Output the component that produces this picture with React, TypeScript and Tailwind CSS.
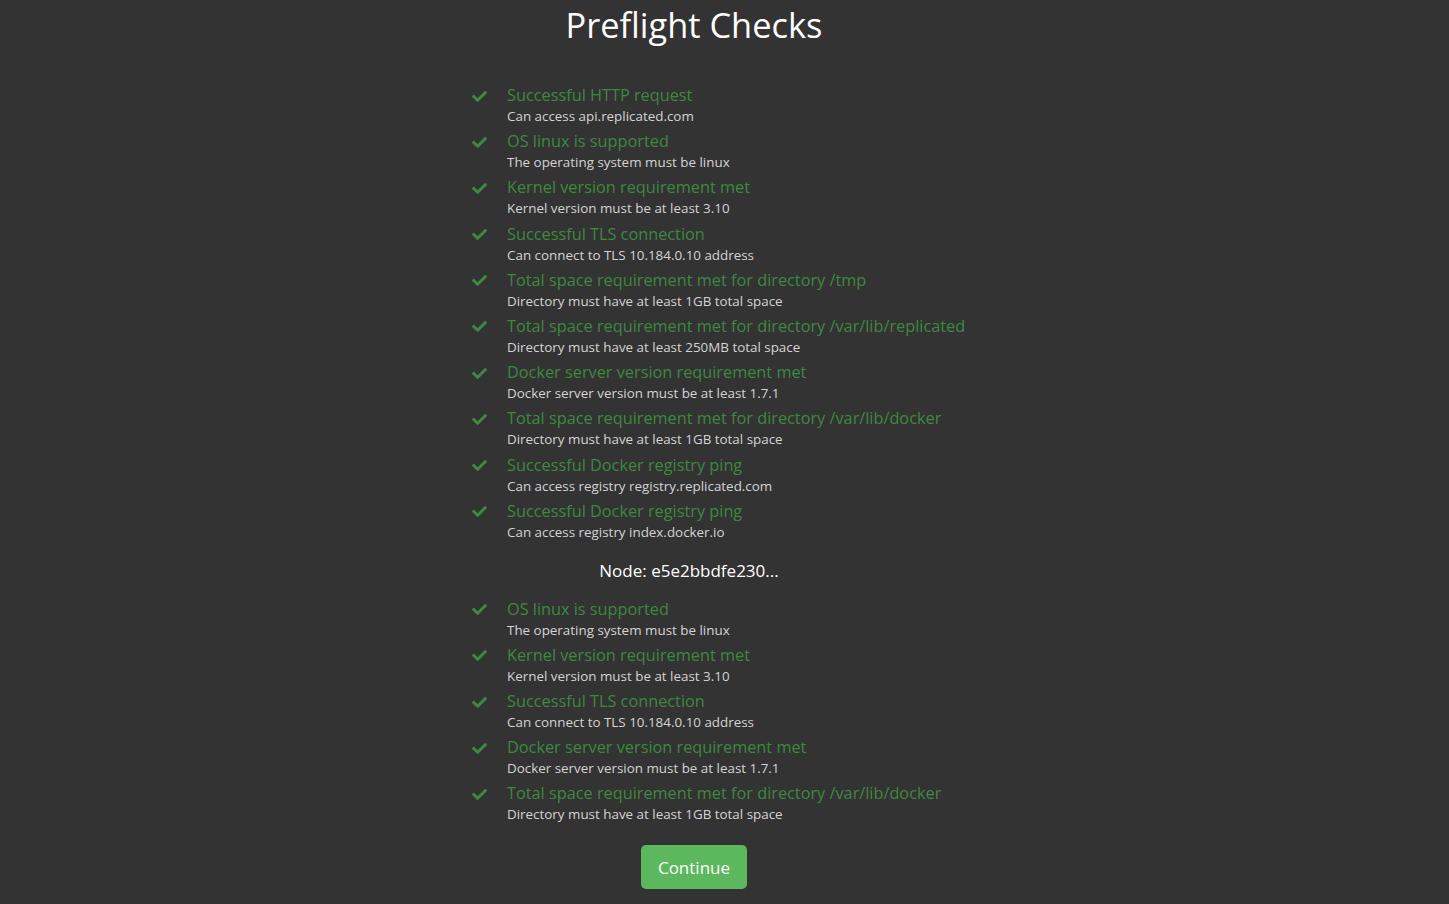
import React from 'react';
import { FaCheck } from 'react-icons/fa';

type Check = {
  title: string;
  detail: string;
};

const clusterChecks: Check[] = [
  { title: 'Successful HTTP request', detail: 'Can access api.replicated.com' },
  { title: 'OS linux is supported', detail: 'The operating system must be linux' },
  { title: 'Kernel version requirement met', detail: 'Kernel version must be at least 3.10' },
  { title: 'Successful TLS connection', detail: 'Can connect to TLS 10.184.0.10 address' },
  { title: 'Total space requirement met for directory /tmp', detail: 'Directory must have at least 1GB total space' },
  { title: 'Total space requirement met for directory /var/lib/replicated', detail: 'Directory must have at least 250MB total space' },
  { title: 'Docker server version requirement met', detail: 'Docker server version must be at least 1.7.1' },
  { title: 'Total space requirement met for directory /var/lib/docker', detail: 'Directory must have at least 1GB total space' },
  { title: 'Successful Docker registry ping', detail: 'Can access registry registry.replicated.com' },
  { title: 'Successful Docker registry ping', detail: 'Can access registry index.docker.io' },
];

const nodeChecks: Check[] = [
  { title: 'OS linux is supported', detail: 'The operating system must be linux' },
  { title: 'Kernel version requirement met', detail: 'Kernel version must be at least 3.10' },
  { title: 'Successful TLS connection', detail: 'Can connect to TLS 10.184.0.10 address' },
  { title: 'Docker server version requirement met', detail: 'Docker server version must be at least 1.7.1' },
  { title: 'Total space requirement met for directory /var/lib/docker', detail: 'Directory must have at least 1GB total space' },
];

const CheckList: React.FC<{ checks: Check[] }> = ({ checks }) => (
  <ul className="w-[444px] whitespace-nowrap flex flex-col gap-[4.2px]">
    {checks.map((check, index) => (
      <li key={index} className="flex">
        <span className="w-[35px] h-[22px] flex items-center shrink-0 pt-[2px]">
          <FaCheck size={15} className="text-[#3d8b3d]" />
        </span>
        <div>
          <div className="text-[16.3px] leading-[22px] text-[#3d893d]">{check.title}</div>
          <div className="text-[13.4px] leading-[20px] text-[#d4d4d4]">{check.detail}</div>
        </div>
      </li>
    ))}
  </ul>
);

const App: React.FC = () => {
  return (
    <div className="min-h-[904px] bg-[#333333] font-['Open_Sans',sans-serif]">
      <div className="w-[1388px] flex flex-col items-center">
        <h1 className="text-[34.4px] leading-[50px] text-white">Preflight Checks</h1>
        <div className="mt-[34px]">
          <CheckList checks={clusterChecks} />
        </div>
        <h2 className="mt-[17px] pr-[10px] text-[17px] leading-[24px] text-white">Node: e5e2bbdfe230...</h2>
        <div className="mt-[15px]">
          <CheckList checks={nodeChecks} />
        </div>
        <button className="mt-[21px] w-[106px] h-[44px] rounded-[5px] bg-[#5cb85c] text-white text-[17px]">
          Continue
        </button>
      </div>
    </div>
  );
};

export default App;
